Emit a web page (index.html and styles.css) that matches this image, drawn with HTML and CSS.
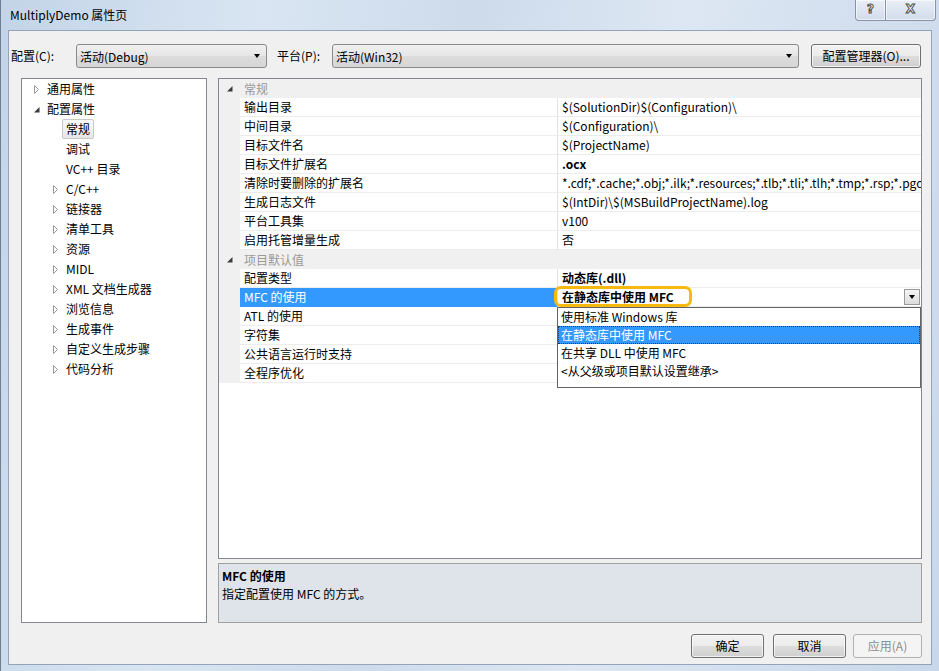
FILE: index.html
```html
<!DOCTYPE html>
<html lang="zh-CN">
<head>
    <meta charset="UTF-8">
    <title>MultiplyDemo 属性页</title>
    <link rel="stylesheet" href="styles.css">
</head>
<body>

<div class="window">
    <!-- Title bar -->
    <div class="titlebar">
        <span class="title">MultiplyDemo 属性页</span>
        <div class="caption-btns">
            <span class="cap-btn help">?</span>
            <span class="cap-btn close">X</span>
        </div>
    </div>

    <div class="client">
        <!-- Configuration / platform selectors -->
        <div class="toolbar">
            <span class="tb-label cfg-label">配置(C):</span>
            <div class="combo cfg-combo"><span>活动(Debug)</span><i class="drop"></i></div>
            <span class="tb-label plat-label">平台(P):</span>
            <div class="combo plat-combo"><span>活动(Win32)</span><i class="drop"></i></div>
            <div class="btn cfg-manager">配置管理器(O)...</div>
        </div>

        <div class="main">
            <!-- Page tree -->
            <div class="tree">
                <div class="node lvl0">
                    <svg class="twisty" viewBox="0 0 9 9"><path d="M2.5 0.5 L6.5 4.5 L2.5 8.5 Z" fill="#fff" stroke="#9a9a9a"/></svg>
                    <span class="node-text">通用属性</span>
                </div>
                <div class="node lvl0">
                    <svg class="twisty" viewBox="0 0 9 9"><path d="M7.5 2 L7.5 7.5 L2 7.5 Z" fill="#3c3c3c"/></svg>
                    <span class="node-text">配置属性</span>
                </div>
                <div class="node lvl1 leaf"><span class="node-text selected">常规</span></div>
                <div class="node lvl1 leaf"><span class="node-text">调试</span></div>
                <div class="node lvl1 leaf"><span class="node-text">VC++ 目录</span></div>
                <div class="node lvl1">
                    <svg class="twisty" viewBox="0 0 9 9"><path d="M2.5 0.5 L6.5 4.5 L2.5 8.5 Z" fill="#fff" stroke="#9a9a9a"/></svg>
                    <span class="node-text">C/C++</span>
                </div>
                <div class="node lvl1">
                    <svg class="twisty" viewBox="0 0 9 9"><path d="M2.5 0.5 L6.5 4.5 L2.5 8.5 Z" fill="#fff" stroke="#9a9a9a"/></svg>
                    <span class="node-text">链接器</span>
                </div>
                <div class="node lvl1">
                    <svg class="twisty" viewBox="0 0 9 9"><path d="M2.5 0.5 L6.5 4.5 L2.5 8.5 Z" fill="#fff" stroke="#9a9a9a"/></svg>
                    <span class="node-text">清单工具</span>
                </div>
                <div class="node lvl1">
                    <svg class="twisty" viewBox="0 0 9 9"><path d="M2.5 0.5 L6.5 4.5 L2.5 8.5 Z" fill="#fff" stroke="#9a9a9a"/></svg>
                    <span class="node-text">资源</span>
                </div>
                <div class="node lvl1">
                    <svg class="twisty" viewBox="0 0 9 9"><path d="M2.5 0.5 L6.5 4.5 L2.5 8.5 Z" fill="#fff" stroke="#9a9a9a"/></svg>
                    <span class="node-text">MIDL</span>
                </div>
                <div class="node lvl1">
                    <svg class="twisty" viewBox="0 0 9 9"><path d="M2.5 0.5 L6.5 4.5 L2.5 8.5 Z" fill="#fff" stroke="#9a9a9a"/></svg>
                    <span class="node-text">XML 文档生成器</span>
                </div>
                <div class="node lvl1">
                    <svg class="twisty" viewBox="0 0 9 9"><path d="M2.5 0.5 L6.5 4.5 L2.5 8.5 Z" fill="#fff" stroke="#9a9a9a"/></svg>
                    <span class="node-text">浏览信息</span>
                </div>
                <div class="node lvl1">
                    <svg class="twisty" viewBox="0 0 9 9"><path d="M2.5 0.5 L6.5 4.5 L2.5 8.5 Z" fill="#fff" stroke="#9a9a9a"/></svg>
                    <span class="node-text">生成事件</span>
                </div>
                <div class="node lvl1">
                    <svg class="twisty" viewBox="0 0 9 9"><path d="M2.5 0.5 L6.5 4.5 L2.5 8.5 Z" fill="#fff" stroke="#9a9a9a"/></svg>
                    <span class="node-text">自定义生成步骤</span>
                </div>
                <div class="node lvl1">
                    <svg class="twisty" viewBox="0 0 9 9"><path d="M2.5 0.5 L6.5 4.5 L2.5 8.5 Z" fill="#fff" stroke="#9a9a9a"/></svg>
                    <span class="node-text">代码分析</span>
                </div>
            </div>

            <div class="right">
                <!-- Property grid -->
                <div class="grid">
                    <div class="row category">
                        <div class="gutter"><svg class="twisty" viewBox="0 0 9 9"><path d="M7.5 2 L7.5 7.5 L2 7.5 Z" fill="#3c3c3c"/></svg></div>
                        <div class="cat-name">常规</div>
                    </div>
                    <div class="row"><div class="gutter"></div><div class="name">输出目录</div><div class="value">$(SolutionDir)$(Configuration)\</div></div>
                    <div class="row"><div class="gutter"></div><div class="name">中间目录</div><div class="value">$(Configuration)\</div></div>
                    <div class="row"><div class="gutter"></div><div class="name">目标文件名</div><div class="value">$(ProjectName)</div></div>
                    <div class="row"><div class="gutter"></div><div class="name">目标文件扩展名</div><div class="value changed">.ocx</div></div>
                    <div class="row"><div class="gutter"></div><div class="name">清除时要删除的扩展名</div><div class="value">*.cdf;*.cache;*.obj;*.ilk;*.resources;*.tlb;*.tli;*.tlh;*.tmp;*.rsp;*.pgc;*.pgd;*.meta;$(TargetPath)</div></div>
                    <div class="row"><div class="gutter"></div><div class="name">生成日志文件</div><div class="value">$(IntDir)\$(MSBuildProjectName).log</div></div>
                    <div class="row"><div class="gutter"></div><div class="name">平台工具集</div><div class="value">v100</div></div>
                    <div class="row"><div class="gutter"></div><div class="name">启用托管增量生成</div><div class="value">否</div></div>
                    <div class="row category">
                        <div class="gutter"><svg class="twisty" viewBox="0 0 9 9"><path d="M7.5 2 L7.5 7.5 L2 7.5 Z" fill="#3c3c3c"/></svg></div>
                        <div class="cat-name">项目默认值</div>
                    </div>
                    <div class="row"><div class="gutter"></div><div class="name">配置类型</div><div class="value changed">动态库(.dll)</div></div>
                    <div class="row active">
                        <div class="gutter"></div>
                        <div class="name">MFC 的使用</div>
                        <div class="value changed editing">
                            <span>在静态库中使用 MFC</span>
                            <span class="mark"></span>
                            <span class="drop-btn"><i class="drop"></i></span>
                            <!-- open drop-down list -->
                            <div class="listbox">
                                <div class="option">使用标准 Windows 库</div>
                                <div class="option picked">在静态库中使用 MFC</div>
                                <div class="option">在共享 DLL 中使用 MFC</div>
                                <div class="option">&lt;从父级或项目默认设置继承&gt;</div>
                            </div>
                        </div>
                    </div>
                    <div class="row"><div class="gutter"></div><div class="name">ATL 的使用</div><div class="value"></div></div>
                    <div class="row"><div class="gutter"></div><div class="name">字符集</div><div class="value"></div></div>
                    <div class="row"><div class="gutter"></div><div class="name">公共语言运行时支持</div><div class="value"></div></div>
                    <div class="row"><div class="gutter"></div><div class="name">全程序优化</div><div class="value"></div></div>
                </div>

                <!-- Description of the selected property -->
                <div class="desc">
                    <div class="desc-title">MFC 的使用</div>
                    <div class="desc-text">指定配置使用 MFC 的方式。</div>
                </div>
            </div>
        </div>

        <div class="footer">
            <div class="btn ok">确定</div>
            <div class="btn cancel">取消</div>
            <div class="btn apply disabled">应用(A)</div>
        </div>
    </div>
</div>

</body>
</html>
```

FILE: styles.css
```css
/* General */
body {
    margin: 0;
    padding: 0;
    font-family: "Noto Sans CJK SC", "Noto Sans", sans-serif;
    font-size: 12px;
    color: #000;
}
.window {
    width: 939px;
    height: 671px;
    display: flex;
    flex-direction: column;
    background: linear-gradient(100deg, #c3d4e8 0%, #d9e5f2 25%, #cddbeb 45%, #dde7f3 65%, #c8d7ea 100%);
    box-shadow: inset 1px 0 #6e7e92;
    overflow: hidden;
}

/* Title bar */
.titlebar {
    height: 30px;
    flex-shrink: 0;
    display: flex;
    align-items: flex-start;
    justify-content: space-between;
}
.title {
    margin-left: 10px;
    line-height: 30px;
    color: #000;
}
.caption-btns {
    display: flex;
    margin-right: 3px;
}
.cap-btn {
    height: 20px;
    line-height: 19px;
    text-align: center;
    font-family: "DejaVu Sans", sans-serif;
    font-weight: bold;
    font-size: 12px;
    color: #fff;
    -webkit-text-stroke: 1px #4b4b4b;
    background: linear-gradient(#e8eef6, #d2dceb);
    border: 1px solid #8894a6;
    border-top: none;
    box-shadow: inset 0 0 0 1px rgba(255, 255, 255, 0.6);
}
.cap-btn.help {
    width: 29px;
    border-radius: 0 0 0 4px;
}
.cap-btn.close {
    width: 49px;
    border-left: none;
    border-radius: 0 0 4px 0;
}

/* Client area */
.client {
    flex: 1;
    min-height: 0;
    margin: 0 7px 6px 8px;
    border: 1px solid #93a3b8;
    background-color: #f0f0f0;
    padding: 13px 9px 6px 2px;
    display: flex;
    flex-direction: column;
}

/* Toolbar */
.toolbar {
    height: 24px;
    display: flex;
    align-items: center;
}
.tb-label {
    line-height: 24px;
}
.cfg-label {
    width: 65px;
}
.plat-label {
    width: 55px;
    margin-left: 10px;
}
.combo {
    box-sizing: border-box;
    height: 24px;
    display: flex;
    align-items: center;
    justify-content: space-between;
    padding: 0 6px 0 3px;
    border: 1px solid #8a8a8a;
    border-radius: 3px;
    background: linear-gradient(#f0f0f0 0%, #e6e6e6 50%, #dcdcdc 51%, #d6d6d6 100%);
}
.cfg-combo {
    width: 191px;
}
.plat-combo {
    width: 467px;
}
.drop {
    width: 0;
    height: 0;
    border-left: 3.5px solid transparent;
    border-right: 3.5px solid transparent;
    border-top: 4px solid #000;
}
.btn {
    box-sizing: border-box;
    height: 24px;
    line-height: 22px;
    text-align: center;
    border: 1px solid #707070;
    border-radius: 3px;
    background: linear-gradient(#f2f2f2 0%, #ebebeb 50%, #dddddd 51%, #cfcfcf 100%);
    box-shadow: inset 0 0 0 1px rgba(255, 255, 255, 0.7);
}
.cfg-manager {
    width: 110px;
    margin-left: 12px;
}

/* Tree + grid */
.main {
    flex: 1;
    min-height: 0;
    display: flex;
    margin: 10px 0 0 10px;
    gap: 11px;
}
.tree {
    width: 186px;
    flex-shrink: 0;
    box-sizing: border-box;
    border: 1px solid #828790;
    background-color: #fff;
}
.node {
    height: 20px;
    display: flex;
    align-items: center;
    gap: 6px;
    line-height: 20px;
    white-space: nowrap;
}
.node.lvl0 {
    padding-left: 10px;
}
.node.lvl1 {
    padding-left: 29px;
}
.node.leaf {
    padding-left: 44px;
}
.twisty {
    width: 9px;
    height: 9px;
    flex-shrink: 0;
}
.node-text.selected {
    line-height: 18px;
    margin-left: -4px;
    padding: 0 3px;
    border: 1px solid #c8c8c8;
    border-radius: 2px;
    background: linear-gradient(#fafafa, #e6e6e6);
}

.right {
    flex: 1;
    min-width: 0;
    display: flex;
    flex-direction: column;
    gap: 4px;
}
.grid {
    flex: 1;
    border: 1px solid #828790;
    background-color: #fff;
}
.row {
    height: 19px;
    display: flex;
    line-height: 18px;
}
.gutter {
    width: 21px;
    flex-shrink: 0;
    background-color: #f0f0f0;
    display: flex;
    align-items: center;
    justify-content: center;
}
.name {
    width: 313px;
    flex-shrink: 0;
    padding-left: 4px;
    border-bottom: 1px solid #ececec;
    border-right: 1px solid #e2e2e2;
    white-space: nowrap;
}
.value {
    flex: 1;
    min-width: 0;
    padding-left: 4px;
    border-bottom: 1px solid #ececec;
    white-space: nowrap;
    overflow: hidden;
}
.value.changed {
    font-weight: bold;
}
.category {
    background-color: #f0f0f0;
}
.cat-name {
    padding-left: 4px;
    line-height: 19px;
    color: #999;
}
.row.active .name {
    background-color: #3399ff;
    border-bottom-color: #3399ff;
    color: #fff;
}

/* Open drop-down on the active row */
.value.editing {
    position: relative;
    overflow: visible;
    display: flex;
    align-items: center;
    justify-content: space-between;
    padding-right: 1px;
}
.mark {
    position: absolute;
    left: -4px;
    top: -2px;
    width: 132px;
    height: 15px;
    border: 3px solid #f7b90e;
    border-radius: 7px;
}
.drop-btn {
    box-sizing: border-box;
    width: 16px;
    height: 16px;
    display: flex;
    align-items: center;
    justify-content: center;
    border: 1px solid #9a9a9a;
    background: linear-gradient(#f4f4f4, #dcdcdc);
}
.listbox {
    position: absolute;
    top: 19px;
    left: -1px;
    right: 0;
    height: 81px;
    box-sizing: border-box;
    border: 1px solid #646464;
    background-color: #fff;
    font-weight: normal;
    z-index: 2;
}
.option {
    height: 18px;
    line-height: 18px;
    padding-left: 3px;
}
.option.picked {
    background-color: #3399ff;
    color: #fff;
    outline: 1px dotted #1e3a5f;
    outline-offset: -1px;
}

/* Description pane */
.desc {
    height: 60px;
    flex-shrink: 0;
    box-sizing: border-box;
    border: 1px solid #a0a0a0;
    background-color: #dfe3ea;
    padding: 3px 3px;
    line-height: 18px;
}
.desc-title {
    font-weight: bold;
}

/* Dialog buttons */
.footer {
    display: flex;
    justify-content: flex-end;
    margin-top: 11px;
}
.footer .btn {
    width: 73px;
}
.footer .cancel {
    margin-left: 9px;
}
.footer .apply {
    width: 69px;
    margin-left: 7px;
}
.btn.disabled {
    color: #8d8d8d;
    border-color: #adb2b5;
    background: #f4f4f4;
    box-shadow: none;
}
```
